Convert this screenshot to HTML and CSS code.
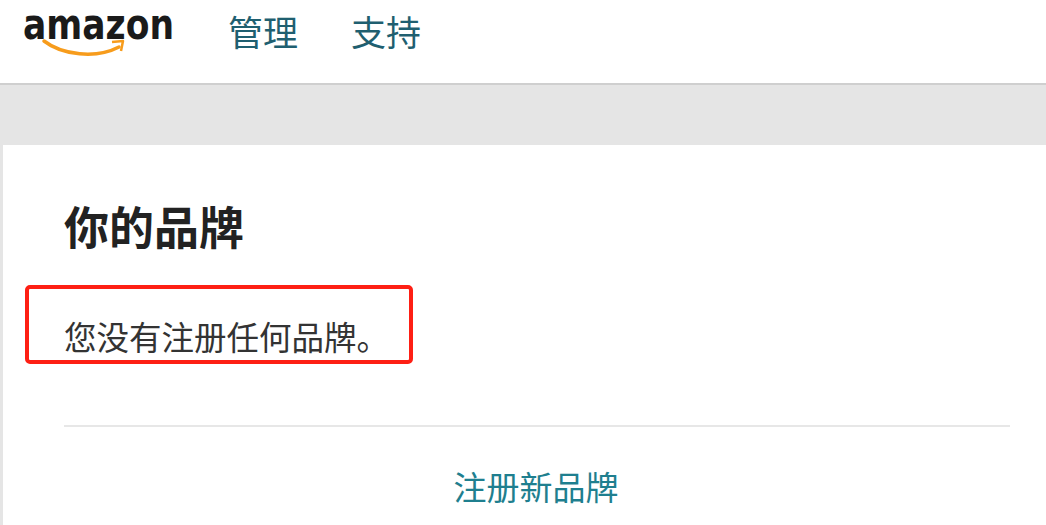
FILE: index.html
```html
<!DOCTYPE html>
<html lang="zh-CN">

<head>
    <meta charset="UTF-8">
    <title>你的品牌</title>
    <link rel="stylesheet" href="styles.css">
</head>

<body>

    <header class="top-bar">
        <a class="logo" href="#">
            <svg width="186" height="60" viewBox="0 0 186 60">
                <text class="logo-text" x="1" y="39" textLength="151" lengthAdjust="spacingAndGlyphs">amazon</text>
                <path d="M22 41C40 55 74 59 97 47" fill="none" stroke="#f79c1c" stroke-width="3.500" stroke-linecap="round" />
                <path d="M90 42L101 41L99 51" fill="none" stroke="#f79c1c" stroke-width="2.500" stroke-linejoin="round" />
            </svg>
        </a>
        <nav class="top-nav">
            <a href="#">管理</a>
            <a href="#">支持</a>
        </nav>
    </header>

    <div class="grey-band"></div>

    <main class="brand-card">
        <h1>你的品牌</h1>
        <div class="empty-row">
            <p>您没有注册任何品牌。</p>
            <div class="red-box"></div>
        </div>
        <hr class="divider">
        <a class="register-link" href="#">注册新品牌</a>
    </main>

</body>

</html>
```

FILE: styles.css
```css
body {
    margin: 0;
    height: 525px;
    overflow: hidden;
    background-color: #e5e5e5;
    font-family: "Liberation Sans", "Noto Sans CJK SC", sans-serif;
    color: #333;
}

a {
    text-decoration: none;
}

/* 顶部导航 */
.top-bar {
    height: 83px;
    display: flex;
    background-color: #fff;
    border-bottom: 2px solid #cfcfcf;
}

.logo {
    display: block;
    margin-left: 22px;
    height: 60px;
}

.logo-text {
    font-family: "DejaVu Sans", sans-serif;
    font-size: 42px;
    font-weight: bold;
    fill: #1a1a1a;
}

.top-nav {
    display: flex;
    gap: 53px;
    margin-left: 20px;
    padding-top: 12px;
    font-size: 35px;
    line-height: 44px;
}

.top-nav a {
    color: #1f5f70;
}

.grey-band {
    height: 60px;
}

/* 品牌卡片 */
.brand-card {
    box-sizing: border-box;
    margin-left: 3px;
    height: 380px;
    padding: 55px 36px 0 61px;
    background-color: #fff;
    overflow: hidden;
}

.brand-card h1 {
    margin: 0;
    font-size: 45px;
    line-height: 60px;
    font-weight: bold;
    color: #222;
}

.empty-row {
    position: relative;
    margin-top: 57px;
}

.empty-row p {
    margin: 0;
    font-size: 32.500px;
    line-height: 44px;
    color: #333;
}

/* 红色标注框 */
.red-box {
    position: absolute;
    left: -39px;
    top: -32px;
    width: 380px;
    height: 71px;
    border: 4px solid #fe1f14;
    border-radius: 5px;
}

.divider {
    margin: 64px 0 0;
    border: 0;
    border-top: 2px solid #e7e7e7;
}

.register-link {
    display: block;
    margin-top: 40px;
    margin-right: 2px;
    text-align: center;
    font-size: 33px;
    line-height: 44px;
    color: #1f7f8f;
}
```
